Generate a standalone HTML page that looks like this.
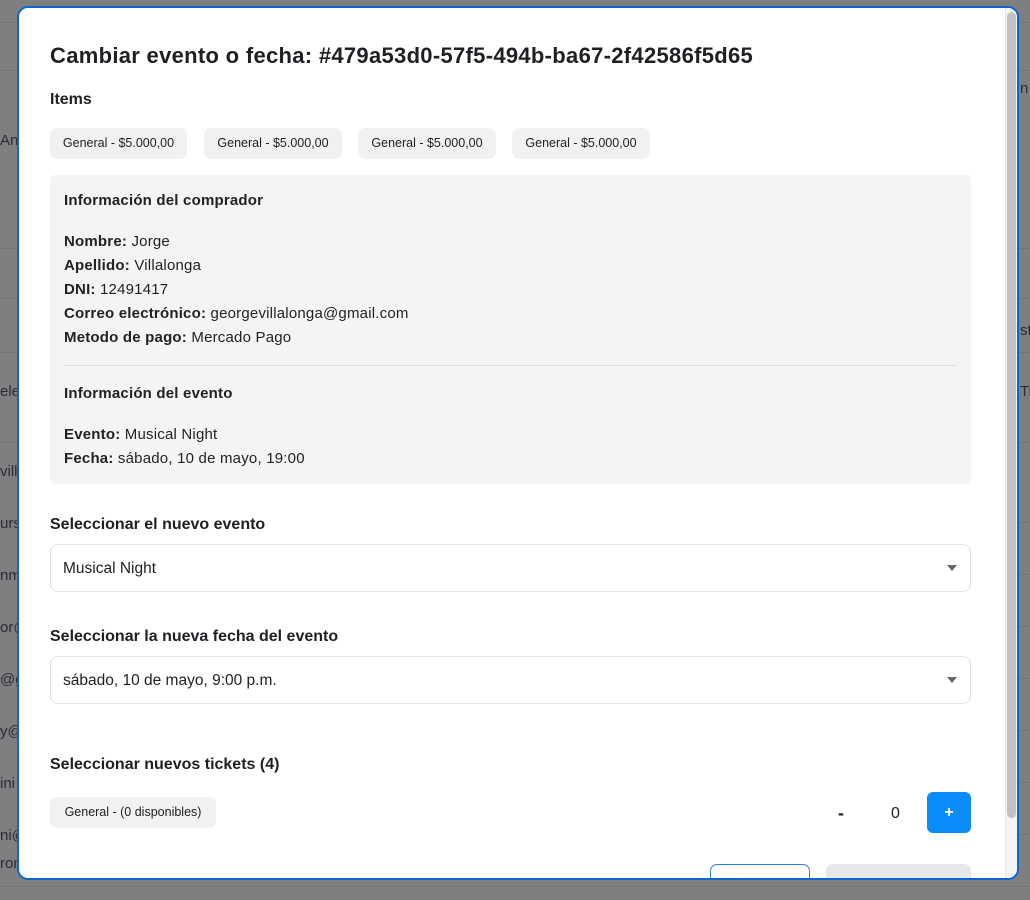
<!DOCTYPE html>
<html><head><meta charset="utf-8"><style>
*{margin:0;padding:0;box-sizing:border-box}
body{width:1030px;height:900px;background:#7e7f81;font-family:"Liberation Sans",sans-serif;color:#1f2024;position:relative;overflow:hidden}
.bg{position:absolute;color:#2c2d30;font-size:15px}
.line{position:absolute;left:0;width:1030px;height:1px;background:#737476}
.modal{position:absolute;left:17px;top:6px;width:1002px;height:874px;background:#fff;border:2px solid #0a66d0;border-radius:11px;overflow:hidden}
.a{position:absolute}
.chip{position:absolute;height:31px;background:#f1f1f2;border-radius:7px;font-size:12.5px;line-height:31px;text-align:center;color:#222}
.info{position:absolute;left:31px;top:167px;width:921px;height:309px;background:#f4f4f5;border-radius:5px}
.info p{position:absolute;left:14px;font-size:15px;color:#222;letter-spacing:0.2px}
.info b{font-weight:bold}
.h{font-weight:bold;font-size:16px}
.sel{position:absolute;left:31px;width:921px;height:48px;border:1px solid #e2e2e6;border-radius:8px;font-size:15.5px;line-height:48px;padding-left:12px}
.sel:after{content:"";position:absolute;right:13px;top:20px;border-left:5px solid transparent;border-right:5px solid transparent;border-top:6px solid #666}
</style></head><body>
<div class="line" style="top:22px"></div>
<div class="line" style="top:70px"></div>
<div class="line" style="top:248px"></div>
<div class="line" style="top:298px"></div>
<div class="line" style="top:352px"></div>
<div class="line" style="top:442px"></div>
<div class="line" style="top:522px"></div>
<div class="line" style="top:574px"></div>
<div class="line" style="top:626px"></div>
<div class="line" style="top:678px"></div>
<div class="line" style="top:730px"></div>
<div class="line" style="top:782px"></div>
<div class="line" style="top:834px"></div>
<div class="line" style="top:886px"></div>
<div class="bg" style="left:0;top:132px">An</div>
<div class="bg" style="left:0;top:383px">elec</div>
<div class="bg" style="left:0;top:463px">vill</div>
<div class="bg" style="left:0;top:515px">urs</div>
<div class="bg" style="left:0;top:567px">nm</div>
<div class="bg" style="left:0;top:619px">or@</div>
<div class="bg" style="left:0;top:671px">@g</div>
<div class="bg" style="left:0;top:723px">y@</div>
<div class="bg" style="left:0;top:775px">ini</div>
<div class="bg" style="left:0;top:827px">ni@</div>
<div class="bg" style="left:0;top:855px">ron</div>
<div class="bg" style="left:1020px;top:80px">n</div>
<div class="bg" style="left:1020px;top:322px">st</div>
<div class="bg" style="left:1020px;top:383px">Ti</div>
<div class="modal">
<div class="a" style="left:31px;top:35px;font-size:22px;font-weight:bold;letter-spacing:0.3px">Cambiar evento o fecha: #479a53d0-57f5-494b-ba67-2f42586f5d65</div>
<div class="a h" style="left:31px;top:83px">Items</div>
<div class="chip" style="left:31px;top:120px;width:137px">General - $5.000,00</div>
<div class="chip" style="left:185px;top:120px;width:138px">General - $5.000,00</div>
<div class="chip" style="left:339px;top:120px;width:138px">General - $5.000,00</div>
<div class="chip" style="left:493px;top:120px;width:138px">General - $5.000,00</div>
<div class="info">
<p class="h" style="top:17px">Información del comprador</p>
<p style="top:58px"><b>Nombre:</b> Jorge</p>
<p style="top:82px"><b>Apellido:</b> Villalonga</p>
<p style="top:106px"><b>DNI:</b> 12491417</p>
<p style="top:130px"><b>Correo electrónico:</b> georgevillalonga@gmail.com</p>
<p style="top:154px"><b>Metodo de pago:</b> Mercado Pago</p>
<div class="a" style="left:14px;top:190px;width:893px;height:1px;background:#dedee0"></div>
<p class="h" style="top:210px">Información del evento</p>
<p style="top:251px"><b>Evento:</b> Musical Night</p>
<p style="top:275px"><b>Fecha:</b> sábado, 10 de mayo, 19:00</p>
</div>
<div class="a h" style="left:31px;top:508px">Seleccionar el nuevo evento</div>
<div class="sel" style="top:536px">Musical Night</div>
<div class="a h" style="left:31px;top:620px">Seleccionar la nueva fecha del evento</div>
<div class="sel" style="top:648px">sábado, 10 de mayo, 9:00 p.m.</div>
<div class="a h" style="left:31px;top:748px">Seleccionar nuevos tickets (4)</div>
<div class="chip" style="left:31px;top:789px;width:166px">General - (0 disponibles)</div>
<div class="a" style="left:819px;top:795px;font-size:18px;font-weight:bold">-</div>
<div class="a" style="left:872px;top:797px;font-size:16px">0</div>
<div class="a" style="left:908px;top:784px;width:44px;height:41px;background:#0a8df9;border-radius:6px;color:#fff;font-weight:bold;font-size:16px;text-align:center;line-height:41px">+</div>
<div class="a" style="left:691px;top:856px;width:100px;height:20px;border:1px solid #2a7fe0;border-radius:7px;background:#fff"></div>
<div class="a" style="left:807px;top:856px;width:145px;height:20px;background:#e6e7ea;border-radius:7px"></div>
<div class="a" style="left:986px;top:0;width:12px;height:874px;background:#f4f4f4;border-left:1px solid #e6e6e6"></div>
<div class="a" style="left:988px;top:4px;width:9px;height:806px;background:#c2c2c2;border-radius:5px"></div>
</div>
</body></html>
